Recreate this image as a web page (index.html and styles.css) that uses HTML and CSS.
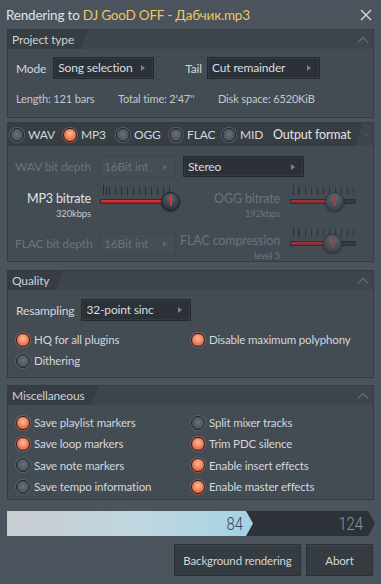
FILE: index.html
```html
<!DOCTYPE html>
<html lang="en">
<head>
    <meta charset="UTF-8">
    <meta name="viewport" content="width=device-width, initial-scale=1.0">
    <title>Rendering</title>
    <link rel="stylesheet" href="styles.css">
</head>
<body>
<div class="window">
    <div class="titlebar">
        <span class="title">Rendering to <span class="file">DJ GooD OFF - Дабчик.mp3</span></span>
        <svg class="close" width="12" height="12" viewBox="0 0 12 12"><path d="M1 1L11 11M11 1L1 11" stroke="#d6dadd" stroke-width="1.4"/></svg>
    </div>

    <!-- Project type -->
    <section class="panel panel-project">
        <div class="panel-head">
            <div class="tab">Project type</div>
            <svg class="caret" width="12" height="8" viewBox="0 0 12 8"><path d="M1 6.5L6 1.5L11 6.5" fill="none" stroke="#5f6870" stroke-width="1.5"/></svg>
        </div>
        <div class="project-row">
            <span class="label">Mode</span>
            <div class="select mode-select">Song selection</div>
            <span class="label tail-label">Tail</span>
            <div class="select tail-select">Cut remainder</div>
        </div>
        <div class="info">
            <span class="info-len">Length: 121 bars</span>
            <span class="info-time">Total time: 2'47''</span>
            <span>Disk space: 6520KiB</span>
        </div>
    </section>

    <!-- Output format -->
    <section class="panel panel-format">
        <div class="panel-head head-tall">
            <div class="tab tab-wide">
                <label class="radio-item"><span class="radio"></span>WAV</label>
                <label class="radio-item"><span class="radio on"></span>MP3</label>
                <label class="radio-item"><span class="radio"></span>OGG</label>
                <label class="radio-item"><span class="radio"></span>FLAC</label>
                <label class="radio-item"><span class="radio"></span>MID</label>
                <span class="format-title">Output format</span>
            </div>
            <svg class="caret" width="12" height="8" viewBox="0 0 12 8"><path d="M1 6.5L6 1.5L11 6.5" fill="none" stroke="#5f6870" stroke-width="1.5"/></svg>
        </div>
        <div class="format-grid">
            <span class="label dim right">WAV bit depth</span>
            <div class="select disabled">16Bit int</div>
            <div class="select stereo-select">Stereo</div>

            <div class="knob-label">
                <span class="main">MP3 bitrate</span>
                <span class="sub">320kbps</span>
            </div>
            <div class="slider">
                <div class="ticks"></div>
                <div class="track"><div class="fill" style="width: 64px"></div></div>
                <div class="knob" style="left: 61px"></div>
            </div>
            <div class="knob-label dim">
                <span class="main">OGG bitrate</span>
                <span class="sub">192kbps</span>
            </div>
            <div class="slider off">
                <div class="ticks"></div>
                <div class="track"><div class="fill" style="width: 38px"></div></div>
                <div class="knob" style="left: 35px"></div>
            </div>

            <span class="label dim right">FLAC bit depth</span>
            <div class="select disabled">16Bit int</div>
            <div class="knob-label dim raised-label">
                <span class="main">FLAC compression</span>
                <span class="sub">level 5</span>
            </div>
            <div class="slider off raised">
                <div class="ticks"></div>
                <div class="track"><div class="fill" style="width: 36px"></div></div>
                <div class="knob" style="left: 33px"></div>
            </div>
        </div>
    </section>

    <!-- Quality -->
    <section class="panel panel-quality">
        <div class="panel-head">
            <div class="tab">Quality</div>
            <svg class="caret" width="12" height="8" viewBox="0 0 12 8"><path d="M1 6.5L6 1.5L11 6.5" fill="none" stroke="#5f6870" stroke-width="1.5"/></svg>
        </div>
        <div class="resample-row">
            <span class="label">Resampling</span>
            <div class="select resample-select">32-point sinc</div>
        </div>
        <div class="option-grid">
            <label class="radio-item"><span class="radio on"></span>HQ for all plugins</label>
            <label class="radio-item"><span class="radio on"></span>Disable maximum polyphony</label>
            <label class="radio-item"><span class="radio"></span>Dithering</label>
        </div>
    </section>

    <!-- Miscellaneous -->
    <section class="panel panel-misc">
        <div class="panel-head">
            <div class="tab">Miscellaneous</div>
            <svg class="caret" width="12" height="8" viewBox="0 0 12 8"><path d="M1 6.5L6 1.5L11 6.5" fill="none" stroke="#5f6870" stroke-width="1.5"/></svg>
        </div>
        <div class="option-grid misc-grid">
            <label class="radio-item"><span class="radio on"></span>Save playlist markers</label>
            <label class="radio-item"><span class="radio"></span>Split mixer tracks</label>
            <label class="radio-item"><span class="radio on"></span>Save loop markers</label>
            <label class="radio-item"><span class="radio on"></span>Trim PDC silence</label>
            <label class="radio-item"><span class="radio"></span>Save note markers</label>
            <label class="radio-item"><span class="radio on"></span>Enable insert effects</label>
            <label class="radio-item"><span class="radio"></span>Save tempo information</label>
            <label class="radio-item"><span class="radio on"></span>Enable master effects</label>
        </div>
    </section>

    <div class="progress">
        <div class="progress-fill" style="width: 246px"><span>84</span></div>
        <span class="progress-total">124</span>
    </div>

    <div class="buttons">
        <button class="btn btn-bg">Background rendering</button>
        <button class="btn btn-abort">Abort</button>
    </div>
</div>
</body>
</html>
```

FILE: styles.css
```css
* {
    box-sizing: border-box;
}
body {
    margin: 0;
    background-color: #4b545d;
    font-family: Lato, "Noto Sans", sans-serif;
    font-size: 11.5px;
    letter-spacing: -0.15px;
    color: #d3d7db;
}
.window {
    width: 381px;
    height: 584px;
    overflow: hidden;
}
.titlebar {
    height: 29px;
    display: flex;
    align-items: center;
    justify-content: space-between;
    padding: 0 9px 0 6px;
}
.title {
    font-size: 13.5px;
    color: #dfe3e6;
    white-space: nowrap;
    letter-spacing: -0.2px;
}
.file {
    color: #f2c55c;
}

/* panels */
.panel {
    margin: 0 7px;
    background-color: #434b53;
    border: 1px solid #353b41;
}
.panel-project {
    height: 89px;
}
.panel-format {
    height: 140px;
    margin-top: 4px;
}
.panel-quality {
    height: 108px;
    margin-top: 8px;
}
.panel-misc {
    height: 115px;
    margin-top: 7px;
}
.panel-head {
    height: 19px;
    display: flex;
    align-items: center;
    justify-content: space-between;
    background-color: #3e454c;
    padding-right: 4px;
}
.head-tall {
    height: 23px;
}
.tab {
    height: 100%;
    display: flex;
    align-items: center;
    padding: 0 14px 0 4px;
    background-color: #363d43;
    color: #cdd2d6;
    font-size: 12px;
    white-space: nowrap;
    clip-path: polygon(0 0, 100% 0, calc(100% - 7px) 100%, 0 100%);
}
.tab-wide {
    padding-left: 2px;
    padding-right: 12px;
}
.caret {
    display: block;
}

/* labels & selects */
.label {
    color: #d3d7db;
    font-size: 12px;
    white-space: nowrap;
}
.label.dim {
    color: #6b747c;
}
.right {
    text-align: right;
}
.select {
    position: relative;
    height: 22px;
    line-height: 20px;
    padding-left: 4px;
    background-color: #2b3136;
    border: 1px solid #252a2f;
    box-shadow: inset 0 0 0 1px #343a40;
    color: #d9dde0;
    font-size: 12px;
    white-space: nowrap;
}
.select::after {
    content: "";
    position: absolute;
    right: 8px;
    top: 7px;
    border-left: 4px solid #79828a;
    border-top: 3.5px solid transparent;
    border-bottom: 3.5px solid transparent;
}
.select.disabled {
    background-color: #454d55;
    border-color: #3f464d;
    box-shadow: none;
    color: #6b747c;
}
.select.disabled::after {
    border-left-color: #5d666e;
}

.project-row {
    display: flex;
    align-items: center;
    padding: 8px 0 0 8px;
}
.mode-select {
    width: 101px;
    margin-left: 7px;
}
.tail-label {
    margin-left: 31px;
}
.tail-select {
    width: 113px;
    margin-left: 5px;
}
.info {
    display: flex;
    padding: 13px 0 0 8px;
    font-size: 11px;
    color: #c3c8cc;
    white-space: nowrap;
}
.info-len {
    width: 102px;
}
.info-time {
    width: 100px;
}

/* radios */
.radio-item {
    display: flex;
    align-items: center;
    gap: 4px;
    font-size: 11.5px;
    color: #d3d7db;
    white-space: nowrap;
}
.radio {
    width: 14px;
    height: 14px;
    border-radius: 50%;
    flex: none;
    border: 1px solid #22272b;
    background: radial-gradient(circle at 50% 45%, #6a7178 0%, #50575e 55%, #3a4046 100%);
    box-shadow: 0 0 0 1px #5a626a;
}
.radio.on {
    background: radial-gradient(circle at 50% 40%, #ffc0a0 0%, #f5845f 45%, #c84b31 100%);
    box-shadow: 0 0 0 1px #8a5a4e;
}

/* output format */
.tab-wide .radio-item {
    width: 53px;
    font-size: 12px;
}
.format-title {
    margin-left: -2px;
    font-size: 12.5px;
    color: #e2e5e8;
}
.format-grid {
    display: grid;
    grid-template-columns: 76px 77px 96px 68px;
    grid-template-rows: 20px 42px 26px;
    column-gap: 8px;
    row-gap: 6px;
    padding: 10px 0 0 7px;
    align-items: center;
}
.format-grid .select {
    height: 21px;
    line-height: 19px;
}
.stereo-select {
    grid-column: 3 / 5;
    width: 121px;
    margin-left: -1px;
}
.knob-label {
    display: flex;
    flex-direction: column;
    align-items: flex-end;
    align-self: start;
    padding-top: 9px;
    white-space: nowrap;
}
.raised-label {
    padding-top: 3px;
}
.knob-label .main {
    font-size: 12.5px;
    color: #e0e3e6;
    line-height: 16px;
}
.knob-label .sub {
    font-size: 9.5px;
    color: #c3c8cc;
    line-height: 13px;
}
.knob-label.dim .main,
.knob-label.dim .sub {
    color: #6b747c;
}
.slider {
    position: relative;
    height: 32px;
    width: 76px;
    align-self: start;
    margin-left: 1px;
}
.slider.off {
    width: 70px;
    margin-left: 2px;
}
.slider.raised {
    margin-top: -6px;
}
.ticks {
    position: absolute;
    left: 3px;
    top: 3px;
    width: 70px;
    height: 10px;
    border-left: 1px solid #262b30;
    background: repeating-linear-gradient(to right, #2a3035 0 1px, transparent 1px 6px);
    background-position: 5px 2px;
    background-size: 100% 8px;
    background-repeat: repeat-x;
}
.slider.off .ticks {
    width: 62px;
    opacity: 0.75;
}
.track {
    position: absolute;
    left: 0;
    right: 4px;
    top: 17px;
    height: 5px;
    background-color: #343a40;
    border: 1px solid #2a2f34;
}
.fill {
    height: 100%;
    background: linear-gradient(#d9383c, #a81f24);
}
.slider.off .fill {
    background: linear-gradient(#9c3a40, #7a2c33);
}
.knob {
    position: absolute;
    top: 10px;
    width: 19px;
    height: 19px;
    border-radius: 50%;
    background: radial-gradient(circle at 50% 30%, #5e666e 0%, #3a4046 55%, #24292d 100%);
    border: 1px solid #1d2125;
    box-shadow: 0 1px 2px rgba(0, 0, 0, 0.4);
}
.knob::after {
    content: "";
    position: absolute;
    left: 8px;
    top: 2px;
    width: 2px;
    height: 11px;
    background-color: #d8353a;
}
.slider.off .knob {
    background: radial-gradient(circle at 50% 30%, #60676e 0%, #454c53 55%, #363c42 100%);
    border-color: #33393e;
}
.slider.off .knob::after {
    background-color: #9a3e44;
}

/* quality */
.resample-row {
    display: flex;
    align-items: center;
    gap: 7px;
    padding: 9px 0 0 8px;
}
.resample-select {
    width: 110px;
}
.option-grid {
    display: grid;
    grid-template-columns: 175px 170px;
    grid-auto-rows: 21px;
    align-items: center;
    padding: 8px 0 0 8px;
}
.misc-grid {
    padding-top: 7px;
    grid-auto-rows: 21.3px;
}

/* progress */
.progress {
    margin: 11px 6px 0 7px;
    height: 25px;
    background-color: #2c3237;
    clip-path: polygon(0 0, calc(100% - 7px) 0, 100% 50%, calc(100% - 7px) 100%, 0 100%);
    display: flex;
    align-items: center;
}
.progress-fill {
    height: 100%;
    background: linear-gradient(to right, #c8ccd0 0%, #bfd7e1 55%, #a4d2e4 100%);
    clip-path: polygon(0 0, calc(100% - 7px) 0, 100% 50%, calc(100% - 7px) 100%, 0 100%);
    display: flex;
    align-items: center;
    justify-content: flex-end;
    padding-right: 10px;
}
.progress-fill span,
.progress-total {
    font-family: Roboto, "Noto Sans", sans-serif;
    font-weight: 300;
    font-size: 18px;
    letter-spacing: 0;
    transform: scaleX(0.82);
    transform-origin: right center;
}
.progress-fill span {
    color: #3a4652;
}
.progress-total {
    margin-left: auto;
    margin-right: 12px;
    color: #8d959c;
}

/* buttons */
.buttons {
    display: flex;
    justify-content: flex-end;
    gap: 5px;
    margin: 8px 8px 0 0;
}
.btn {
    height: 32px;
    background-color: #343b41;
    border: 1px solid #2a3035;
    box-shadow: inset 0 1px 0 #3d444a;
    color: #d3d7db;
    font-family: Lato, "Noto Sans", sans-serif;
    font-size: 11.5px;
    letter-spacing: -0.15px;
    white-space: nowrap;
}
.btn-bg {
    width: 127px;
}
.btn-abort {
    width: 67px;
}
```
